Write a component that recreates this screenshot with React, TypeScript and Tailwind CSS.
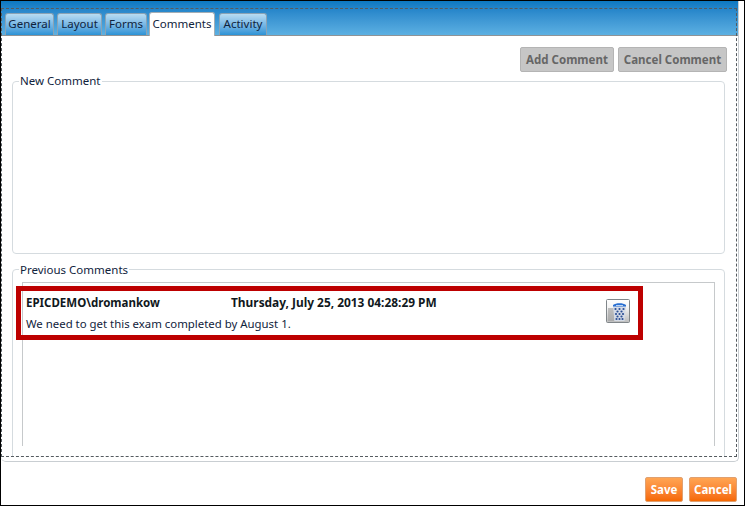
import React from "react";

const tabs = [
  { label: "General", className: "ml-[1px] w-[49px]" },
  { label: "Layout", className: "ml-[3px] w-[45px]" },
  { label: "Forms", className: "ml-[3px] w-[42px]" },
  { label: "Comments", className: "ml-[2px] w-[66px]" },
  { label: "Activity", className: "ml-[4px] w-[48px]" },
];

// speckles on the bin body
const dots = [
  [9.5, 10], [13.5, 10], [17.5, 10],
  [11.5, 12.5], [15.5, 12.5],
  [10, 15], [13.5, 15], [17, 15],
  [11.5, 17.5], [15.5, 17.5],
  [10.5, 20], [13.5, 20], [16.5, 20],
];

const TrashIcon = () => (
  <svg width="24" height="24" viewBox="0 0 24 24">
    <defs>
      <linearGradient id="trashBg" x1="0" y1="0" x2="0" y2="1">
        <stop offset="0" stopColor="#ffffff" />
        <stop offset="0.35" stopColor="#f4f4f4" />
        <stop offset="1" stopColor="#bcbcbc" />
      </linearGradient>
      <filter id="soft">
        <feGaussianBlur stdDeviation="0.4" />
      </filter>
    </defs>
    <rect x="0.5" y="0.5" width="23" height="23" rx="1" fill="url(#trashBg)" stroke="#80868a" />
    <g filter="url(#soft)">
      <path d="M2 9h6v13H2z" fill="#9c9c9c" opacity="0.6" />
      <path d="M7 7h13l-1.5 15h-10z" fill="#d5dbe6" />
      <path d="M7 6c3-2.5 10-2.5 13 0v1.5H7z" fill="#2a6fd2" />
      <path d="M10 6h7v1h-7z" fill="#bcd4f2" />
      {dots.map(([x, y]) => (
        <circle key={`${x}-${y}`} cx={x} cy={y} r="1.1" fill="#2c4f94" />
      ))}
    </g>
  </svg>
);

const App: React.FC = () => {
  return (
    <div className="relative flex h-[506px] w-[745px] flex-col overflow-hidden border border-black bg-white font-['Noto_Sans',sans-serif] text-[11.5px] text-[#10233c]">
      <div className="relative mr-[5px] flex h-[461px] flex-col overflow-hidden rounded-b-[5px] border-r border-b border-[#c9ced2]">
        <div className="flex h-[35px] items-end border-b border-[#8f9396] bg-gradient-to-b from-[#0a78c2] to-[#5cb0e2] pl-[3px]">
          {tabs.map((tab) =>
            tab.label === "Comments" ? (
              <div
                key={tab.label}
                className={`mb-[-1px] flex h-[24px] items-center justify-center rounded-t-[3px] border border-b-0 border-[#a5aeb5] bg-white pb-[1px] ${tab.className}`}
              >
                {tab.label}
              </div>
            ) : (
              <div
                key={tab.label}
                className={`flex h-[22px] items-center justify-center rounded-t-[3px] border border-b-0 border-[#8aa3b5] bg-gradient-to-b from-[#b8dcf2] to-[#2a93d6] pb-[1px] ${tab.className}`}
              >
                {tab.label}
              </div>
            )
          )}
        </div>

        <div className="mb-[4px] flex min-h-0 flex-1 flex-col overflow-hidden pl-[11px] pr-[13px]">
          <div className="mr-[-2px] flex h-[45px] flex-none items-start justify-end gap-[4px] pt-[11px]">
            <button className="h-[25px] w-[94px] rounded-[2px] border border-[#b4b4b4] bg-[#c6c6c6] font-bold text-[#666666]">
              Add Comment
            </button>
            <button className="h-[25px] w-[109px] rounded-[2px] border border-[#b4b4b4] bg-[#c6c6c6] font-bold text-[#666666]">
              Cancel Comment
            </button>
          </div>

          <fieldset className="mt-[-8px] h-[181px] flex-none rounded-[4px] border border-[#d5dbdf] pl-[6px]">
            <legend className="px-[1px] leading-[16px]">New Comment</legend>
          </fieldset>

          <fieldset className="mt-[7px] mb-[-20px] flex min-h-0 flex-1 flex-col rounded-[4px] border border-[#d5dbdf] pl-[7px]">
            <legend className="ml-[-1px] px-[1px] pt-[1px] leading-[16px]">Previous Comments</legend>
            <div className="ml-[2px] mr-[9px] mt-[4px] h-[164px] border-x border-t border-[#c6c9cb] pl-[3px] pr-[84px] pt-[11px]">
              <div className="flex items-start justify-between">
                <div>
                  <div className="flex items-baseline font-bold leading-[16px] text-[#101820]">
                    <span className="w-[205px]">EPICDEMO\dromankow</span>
                    <span className="text-[11.9px]">Thursday, July 25, 2013 04:28:29 PM</span>
                  </div>
                  <div className="mt-[5px] text-[11.4px] leading-[16px]">We need to get this exam completed by August 1.</div>
                </div>
                <div className="mt-[5px] h-[24px]">
                  <TrashIcon />
                </div>
              </div>
            </div>
          </fieldset>
        </div>

        {/* focus rectangle */}
        <div className="pointer-events-none absolute bottom-[4px] left-0 right-[1px] top-[7px] border border-dashed border-[#555b60]" />
      </div>

      <div className="flex flex-1 items-start justify-end gap-[6px] pr-[7px] pt-[15px]">
        <button className="h-[25px] w-[38px] rounded-[2px] border border-[#e0a070] bg-gradient-to-b from-[#ffa552] to-[#f56800] font-bold text-white">
          Save
        </button>
        <button className="h-[25px] w-[48px] rounded-[2px] border border-[#e0a070] bg-gradient-to-b from-[#ffa552] to-[#f56800] font-bold text-white">
          Cancel
        </button>
      </div>

      {/* red callout around the comment row */}
      <div className="pointer-events-none absolute left-[15px] top-[285px] h-[54px] w-[627px] border-[5px] border-[#bd0000]" />
    </div>
  );
};

export default App;
